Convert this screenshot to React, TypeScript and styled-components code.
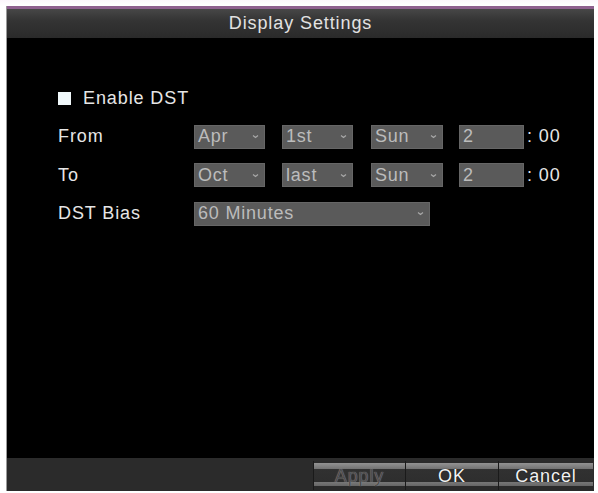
import React from "react";
import styled, { createGlobalStyle } from "styled-components";

const Global = createGlobalStyle`
  html, body { margin: 0; padding: 0; background: #ffffff; }
  body { font-family: "Liberation Sans", Arial, sans-serif; }
  * { box-sizing: border-box; }
`;

const Page = styled.div`
  width: 598px;
  height: 493px;
  padding: 6px 4px 2px 6px;
  background: linear-gradient(#fbf5fb, #ffffff 6px);
`;

const Dialog = styled.div`
  width: 588px;
  height: 485px;
  display: flex;
  flex-direction: column;
  background: #000;
  border-left: 1px solid #9a9a9a;
`;

const Header = styled.div`
  height: 32px;
  border-top: 3px solid #8e5f8e;
  background: linear-gradient(#474747, #343434 40%, #2a2a2a);
  color: #e2e2e2;
  font-size: 18px;
  letter-spacing: 0.9px;
  display: flex;
  align-items: center;
  justify-content: center;
  padding-bottom: 1px;
`;

const Body = styled.div`
  flex: 1;
  padding: 48px 0 0 51px;
  display: flex;
  flex-direction: column;
  gap: 14.5px;
`;

const CheckRow = styled.label`
  height: 24px;
  display: flex;
  align-items: center;
  color: #e6e6e6;
  font-size: 18px;
  letter-spacing: 0.9px;
`;

const Check = styled.span`
  width: 13px;
  height: 13px;
  background: #f0f8fa;
  margin-right: 12px;
`;

const Row = styled.div`
  height: 24px;
  display: flex;
  align-items: center;
`;

const Label = styled.span`
  width: 136px;
  color: #e6e6e6;
  font-size: 18px;
  letter-spacing: 0.9px;
`;

const Field = styled.div<{ $w: number; $gap?: number }>`
  width: ${(p) => p.$w}px;
  height: 100%;
  margin-right: ${(p) => p.$gap ?? 0}px;
  background: #5a5a5a;
  border: 1px solid #666;
  color: #bcbcbc;
  font-size: 18px;
  letter-spacing: 0.8px;
  display: flex;
  align-items: center;
  justify-content: space-between;
  padding: 0 5px 0 3px;
`;

const Suffix = styled.span`
  color: #e6e6e6;
  font-size: 18px;
  letter-spacing: 0.9px;
  margin-left: 3px;
`;

const Footer = styled.div`
  height: 33px;
  background: #2b2b2b;
  display: flex;
  justify-content: flex-end;
  padding: 3px 1px 1px 0;
`;

const Btn = styled.div<{ $w: number; $disabled?: boolean }>`
  width: ${(p) => p.$w}px;
  height: 29px;
  border-left: 1px solid #1a1a1a;
  background: linear-gradient(
    #2a2a2a 0px,
    #2a2a2a 2px,
    #929292 2px,
    #727272 8px,
    #313131 8px,
    #2e2e2e 21px,
    #777 21px,
    #666 25px,
    #2a2a2a 25px
  );
  color: ${(p) => (p.$disabled ? "#4e4e4e" : "#f2f2f2")};
  text-shadow: ${(p) => (p.$disabled ? "0 0 1px #a0a0a0" : "0 0 1px #000")};
  font-size: 18px;
  letter-spacing: 0.9px;
  display: flex;
  align-items: center;
  justify-content: center;
  padding-top: 1px;
`;

const Caret = () => (
  <svg width="7" height="5" viewBox="0 0 7 5">
    <path d="M1 1.5 L3.5 3.5 L6 1.5" stroke="#a8a8a8" strokeWidth="1.2" fill="none" />
  </svg>
);

const Select = ({ w, gap, children }: { w: number; gap?: number; children: React.ReactNode }) => (
  <Field $w={w} $gap={gap}>
    <span>{children}</span>
    <Caret />
  </Field>
);

const TimeRow = ({ label, month, week, day }: { label: string; month: string; week: string; day: string }) => (
  <Row>
    <Label>{label}</Label>
    <Select w={71} gap={17}>{month}</Select>
    <Select w={71} gap={18}>{week}</Select>
    <Select w={72} gap={16}>{day}</Select>
    <Field $w={65}>
      <span>2</span>
    </Field>
    <Suffix>: 00</Suffix>
  </Row>
);

export default function App() {
  return (
    <>
      <Global />
      <Page>
        <Dialog>
          <Header>Display Settings</Header>
          <Body>
            <CheckRow>
              <Check />
              Enable DST
            </CheckRow>
            <TimeRow label="From" month="Apr" week="1st" day="Sun" />
            <TimeRow label="To" month="Oct" week="last" day="Sun" />
            <Row>
              <Label>DST Bias</Label>
              <Select w={236}>60 Minutes</Select>
            </Row>
          </Body>
          <Footer>
            <Btn $w={92} $disabled>
              Apply
            </Btn>
            <Btn $w={93}>OK</Btn>
            <Btn $w={95}>Cancel</Btn>
          </Footer>
        </Dialog>
      </Page>
    </>
  );
}
